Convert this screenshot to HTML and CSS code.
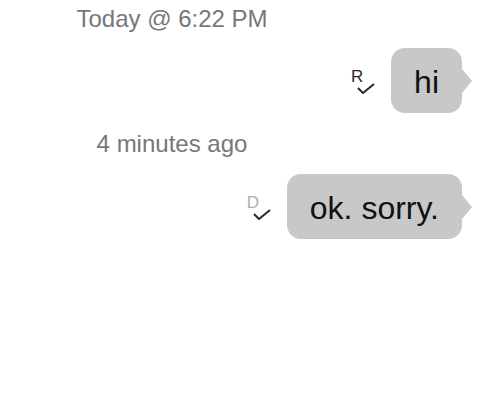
FILE: index.html
```html
<!DOCTYPE html>
<html>
<head>
<meta charset="utf-8">
<link rel="stylesheet" href="styles.css">
</head>
<body>
<div class="thread">
  <div class="time time-first">Today @ 6:22 PM</div>
  <div class="row">
    <div class="status">
      <span class="status-letter read">R</span>
      <svg class="check" width="18" height="11" viewBox="0 0 18 11"><polyline points="1,5 6,10 17,1" fill="none" stroke="#2a2a2a" stroke-width="2" stroke-linejoin="miter"/></svg>
    </div>
    <div class="bubble">hi</div>
  </div>
  <div class="time">4 minutes ago</div>
  <div class="row row-second">
    <div class="status">
      <span class="status-letter delivered">D</span>
      <svg class="check" width="18" height="11" viewBox="0 0 18 11"><polyline points="1,5 6,10 17,1" fill="none" stroke="#2a2a2a" stroke-width="2" stroke-linejoin="miter"/></svg>
    </div>
    <div class="bubble">ok. sorry.</div>
  </div>
</div>
</body>
</html>
```

FILE: styles.css
```css
html, body {
  margin: 0;
  padding: 0;
  background: #ffffff;
}

body {
  font-family: "Liberation Sans", Arial, sans-serif;
  width: 480px;
  height: 411px;
  overflow: hidden;
}

.thread {
  display: flex;
  flex-direction: column;
}

.time {
  width: 344px;
  text-align: center;
  font-size: 24px;
  line-height: 28px;
  color: #777777;
  margin-top: 17px;
}

.time-first {
  margin-top: 5px;
}

.row {
  display: flex;
  justify-content: flex-end;
  align-items: center;
  padding-right: 18px;
  margin-top: 15px;
}

.row-second {
  margin-top: 16px;
}

.status {
  position: relative;
  width: 24px;
  height: 24px;
  margin-right: 16px;
  margin-top: 2px;
}

.status-letter {
  display: block;
  font-size: 17px;
  line-height: 16px;
  margin-top: -1px;
}

.status-letter.read {
  color: #2a2a2a;
}

.status-letter.delivered {
  color: #b0b0b0;
}

.check {
  position: absolute;
  left: 6px;
  top: 13px;
}

.bubble {
  position: relative;
  background: #c8c8c8;
  color: #111111;
  font-size: 32px;
  line-height: 61px;
  padding: 4px 23px 0;
  border-radius: 14px;
}

.bubble::after {
  content: "";
  position: absolute;
  right: -10px;
  top: 50%;
  margin-top: -12px;
  border-left: 10px solid #c8c8c8;
  border-top: 12px solid transparent;
  border-bottom: 12px solid transparent;
}
```
